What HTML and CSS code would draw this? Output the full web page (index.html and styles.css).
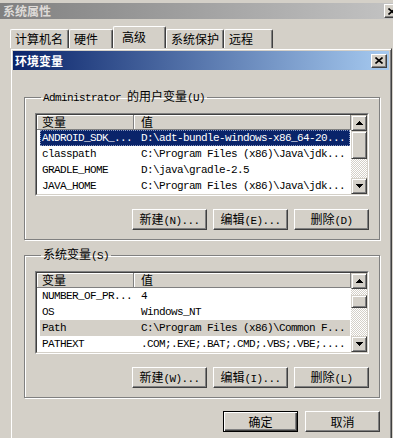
FILE: index.html
```html
<!DOCTYPE html>
<html lang="zh-CN">
<head>
  <meta charset="UTF-8">
  <title>环境变量</title>
<link rel="stylesheet" href="styles.css">
</head>
<body>
  <div class="win-title">
    <span>系统属性</span>
    <span class="tbtn"><svg width="8" height="7" viewBox="0 0 8 7"><path d="M0.5 0.5 L7.5 6.5 M7.5 0.5 L0.5 6.5" stroke="#000" stroke-width="1.6"/></svg></span>
  </div>

  <div class="tabs">
    <div class="tab t1">计算机名</div>
    <div class="tab t2">硬件</div>
    <div class="tab t3 active">高级</div>
    <div class="tab t4">系统保护</div>
    <div class="tab t5">远程</div>
  </div>

  <div class="page">
    <div class="page-edge"></div>

    <div class="dialog">
      <div class="dlg-title">
        <span>环境变量</span>
        <span class="tbtn"><svg width="8" height="7" viewBox="0 0 8 7"><path d="M0.5 0.5 L7.5 6.5 M7.5 0.5 L0.5 6.5" stroke="#000" stroke-width="1.6"/></svg></span>
      </div>

      <div class="dlg-body">
        <!-- user variables -->
        <fieldset class="group">
          <legend><span class="en">Administrator </span>的用户变量<span class="en">(U)</span></legend>
          <div class="list">
            <div class="list-in">
              <div class="list-main">
                <div class="list-head"><div class="hcell c1">变量</div><div class="hcell c2">值</div></div>
                <div class="row sel"><div class="c-name">ANDROID_SDK_...</div><div class="c-val">D:\adt-bundle-windows-x86_64-20...</div></div>
                <div class="row"><div class="c-name">classpath</div><div class="c-val">C:\Program Files (x86)\Java\jdk...</div></div>
                <div class="row"><div class="c-name">GRADLE_HOME</div><div class="c-val">D:\java\gradle-2.5</div></div>
                <div class="row"><div class="c-name">JAVA_HOME</div><div class="c-val">C:\Program Files (x86)\Java\jdk...</div></div>
              </div>
              <div class="vscroll">
                <div class="sb-btn"><svg width="7" height="4" viewBox="0 0 7 4" shape-rendering="crispEdges"><path d="M3 0h1v1h1v1h1v1h1v1H0V3h1V2h1V1h1z" fill="#000"/></svg></div>
                <div class="sb-thumb thumb-user"></div>
                <div class="sb-track"></div>
                <div class="sb-btn"><svg width="7" height="4" viewBox="0 0 7 4" shape-rendering="crispEdges"><path d="M0 0h7v1H6v1H5v1H4v1H3V3H2V2H1V1H0z" fill="#000"/></svg></div>
              </div>
            </div>
          </div>
          <div class="btn-row">
            <button class="btn">新建<span class="en">(N)...</span></button>
            <button class="btn">编辑<span class="en">(E)...</span></button>
            <button class="btn">删除<span class="en">(D)</span></button>
          </div>
        </fieldset>

        <!-- system variables -->
        <fieldset class="group group-sys">
          <legend>系统变量<span class="en">(S)</span></legend>
          <div class="list">
            <div class="list-in">
              <div class="list-main">
                <div class="list-head"><div class="hcell c1">变量</div><div class="hcell c2">值</div></div>
                <div class="row"><div class="c-name">NUMBER_OF_PR...</div><div class="c-val">4</div></div>
                <div class="row"><div class="c-name">OS</div><div class="c-val">Windows_NT</div></div>
                <div class="row sel-off"><div class="c-name">Path</div><div class="c-val">C:\Program Files (x86)\Common F...</div></div>
                <div class="row"><div class="c-name">PATHEXT</div><div class="c-val">.COM;.EXE;.BAT;.CMD;.VBS;.VBE;....</div></div>
              </div>
              <div class="vscroll">
                <div class="sb-btn"><svg width="7" height="4" viewBox="0 0 7 4" shape-rendering="crispEdges"><path d="M3 0h1v1h1v1h1v1h1v1H0V3h1V2h1V1h1z" fill="#000"/></svg></div>
                <div class="sb-track track-top"></div>
                <div class="sb-thumb thumb-sys"></div>
                <div class="sb-track"></div>
                <div class="sb-btn"><svg width="7" height="4" viewBox="0 0 7 4" shape-rendering="crispEdges"><path d="M0 0h7v1H6v1H5v1H4v1H3V3H2V2H1V1H0z" fill="#000"/></svg></div>
              </div>
            </div>
          </div>
          <div class="btn-row">
            <button class="btn">新建<span class="en">(W)...</span></button>
            <button class="btn">编辑<span class="en">(I)...</span></button>
            <button class="btn">删除<span class="en">(L)</span></button>
          </div>
        </fieldset>

        <div class="btn-row dlg-actions">
          <button class="btn btn-default">确定</button>
          <button class="btn">取消</button>
        </div>
      </div>
    </div>
  </div>
</body>
</html>
```

FILE: styles.css
```css
body {
  margin: 0;
  height: 438px;
  overflow: hidden;
  background-color: #d4d0c8;
  color: #000;
  font-family: "Noto Sans CJK SC", sans-serif;
  font-size: 12px;
  line-height: 14px;
}

.en {
  font-family: "Liberation Mono", "Noto Sans CJK SC", monospace;
  font-size: 11px;
  letter-spacing: -0.6px;
}

/* title bars */
.win-title, .dlg-title {
  display: flex;
  justify-content: space-between;
  align-items: center;
  font-weight: bold;
}

.win-title {
  margin: 3px -9px 0 0;
  height: 16px;
  padding-left: 3px;
  background: linear-gradient(to right, #808080, #c4c4c4);
  color: #dedbd8;
}

.dlg-title {
  height: 19px;
  padding-left: 2px;
  background: linear-gradient(to right, #0a246a, #a6caf0);
  color: #fff;
}

.tbtn {
  width: 16px;
  height: 14px;
  margin-right: 2px;
  box-sizing: border-box;
  display: flex;
  align-items: center;
  justify-content: center;
  background-color: #d4d0c8;
  border: 1px solid;
  border-color: #fff #404040 #404040 #fff;
  box-shadow: inset -1px -1px #808080;
}

/* tabs */
.tabs {
  display: flex;
  align-items: flex-end;
  height: 22px;
  margin-top: 7px;
  padding-left: 10px;
}

.tab {
  height: 19px;
  box-sizing: border-box;
  padding-left: 4px;
  border: 1px solid;
  border-bottom: none;
  border-color: #fff #404040 transparent #fff;
  border-radius: 2px 2px 0 0;
  box-shadow: inset -1px 0 #808080;
  line-height: 18px;
}

.t1 { width: 59px; }
.t2 { width: 44px; }
.t3 { width: 53px; }
.t4 { width: 58px; }
.t5 { width: 49px; }

.tab.active {
  height: 22px;
  padding-left: 8px;
  line-height: 20px;
}

/* dialog */
.page {
  display: flex;
}

.page-edge {
  width: 10px;
}

.dialog {
  width: 382px;
  height: 400px;
  box-sizing: border-box;
  padding: 2px;
  border: 1px solid;
  border-color: #d4d0c8 #404040 #404040 #d4d0c8;
  box-shadow: inset 1px 1px #fff, inset -1px -1px #808080;
}

.dlg-body {
  padding: 19px 9px 0 11px;
}

.group {
  margin: 0;
  min-width: 0;
  padding: 8px 10px 9px;
  border: 1px solid #808080;
  box-shadow: inset 1px 1px #fff, 1px 1px #fff;
}

.group legend {
  margin-left: 6px;
  padding: 0 2px;
  line-height: 14px;
}

.group-sys {
  margin-top: 7px;
}

/* list view */
.list {
  border: 1px solid;
  border-color: #808080 #fff #fff #808080;
}

.list-in {
  display: flex;
  height: 79px;
  border: 1px solid;
  border-color: #404040 #d4d0c8 #d4d0c8 #404040;
  background-color: #fff;
}

.list-main {
  flex: 1;
  min-width: 0;
}

.list-head {
  display: flex;
  height: 15px;
}

.hcell {
  box-sizing: border-box;
  background-color: #d4d0c8;
  border-right: 1px solid #808080;
  border-bottom: 1px solid #808080;
  box-shadow: inset 1px 1px #fff;
  line-height: 14px;
}

.hcell.c1 {
  width: 97px;
  padding-left: 5px;
}

.hcell.c2 {
  flex: 1;
  padding-left: 7px;
}

.row {
  display: flex;
  height: 16px;
  margin: 0 1px 0 3px;
  line-height: 16px;
  white-space: nowrap;
  font-family: "Liberation Mono", monospace;
  font-size: 11px;
  letter-spacing: -0.6px;
}

.row.sel {
  background-color: #0a246a;
  color: #fff;
  outline: 1px dotted #8a97bd;
  outline-offset: -1px;
}

.row.sel-off {
  background-color: #d4d0c8;
}

.c-name {
  width: 94px;
  flex: none;
  box-sizing: border-box;
  padding-left: 2px;
}

.c-val {
  flex: 1;
  min-width: 0;
  padding-left: 7px;
}

/* scrollbar */
.vscroll {
  width: 16px;
  display: flex;
  flex-direction: column;
}

.sb-btn, .sb-thumb {
  box-sizing: border-box;
  background-color: #d4d0c8;
  border: 1px solid;
  border-color: #d4d0c8 #404040 #404040 #d4d0c8;
  box-shadow: inset 1px 1px #fff, inset -1px -1px #808080;
}

.sb-btn {
  height: 16px;
  display: flex;
  align-items: center;
  justify-content: center;
}

.sb-btn svg {
  display: block;
}

.thumb-user { height: 28px; }
.thumb-sys { height: 13px; }

.sb-track {
  flex: 1;
  background: repeating-conic-gradient(#d4d0c8 0 25%, #fff 0 50%) 0 0 / 2px 2px;
}

.sb-track.track-top {
  flex: none;
  height: 6px;
}

/* buttons */
.btn-row {
  display: flex;
  justify-content: flex-end;
  gap: 6px;
  margin-top: 13px;
}

.btn {
  width: 75px;
  height: 21px;
  padding: 0;
  box-sizing: border-box;
  background-color: #d4d0c8;
  border: 1px solid;
  border-color: #fff #404040 #404040 #fff;
  box-shadow: inset -1px -1px #808080;
  color: #000;
  font: inherit;
  line-height: 18px;
}

.btn-default {
  border-color: #000;
  box-shadow: inset 1px 1px #fff, inset -1px -1px #404040, inset -2px -2px #808080;
}

.dlg-actions {
  gap: 7px;
}
```
